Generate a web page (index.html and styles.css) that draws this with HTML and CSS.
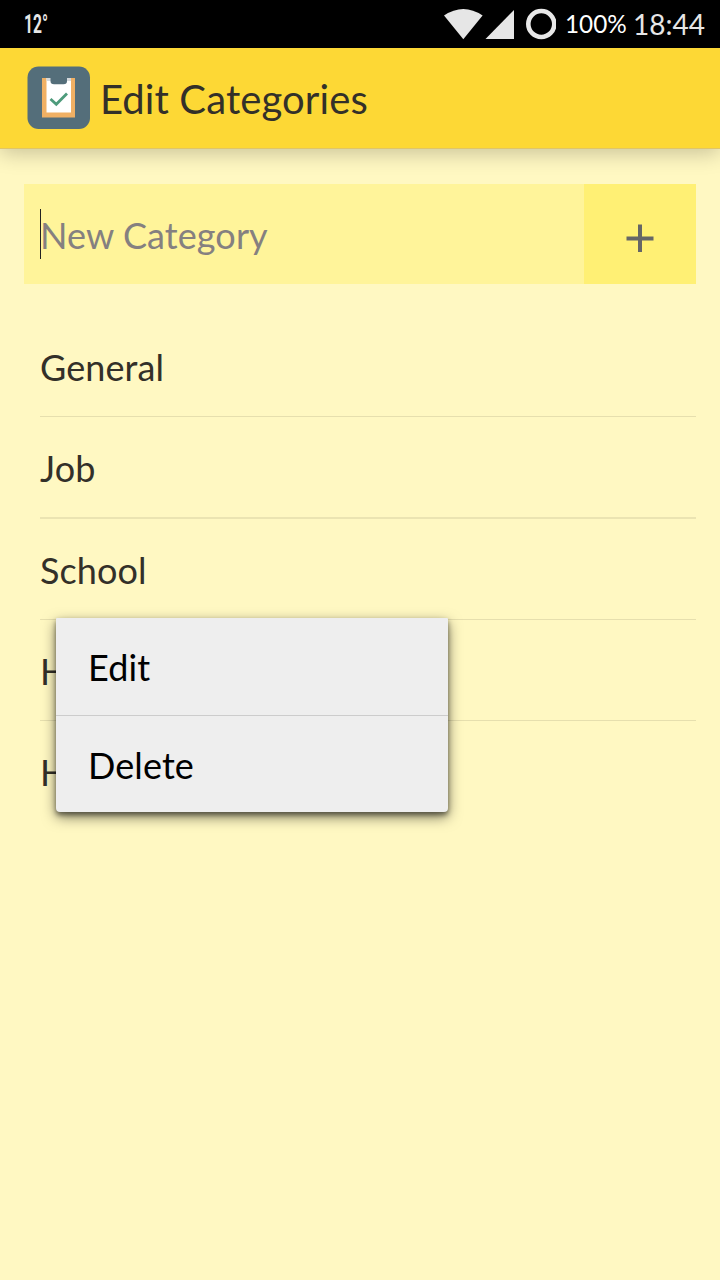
FILE: index.html
```html
<!DOCTYPE html>
<html lang="en">
<head>
<meta charset="utf-8">
<title>Edit Categories</title>
<link rel="stylesheet" href="styles.css">
</head>
<body>
<header class="status">
  <span class="temperature">12°</span>
  <svg class="status-icons" width="116" height="48" viewBox="0 0 116 48">
    <path fill="#e6e6e6" d="M4 15.5Q23.300 2.500 42.600 15.500L23.300 39.300Z"/>
    <path fill="#e6e6e6" d="M45.500 39L74 10V39Z"/>
    <circle cx="101.300" cy="24" r="13" fill="none" stroke="#e8e8e8" stroke-width="4.600"/>
  </svg>
  <span class="battery">100%</span>
  <time class="clock">18:44</time>
</header>
<div class="appbar">
  <svg class="logo" width="64" height="64" viewBox="0 0 64 64">
    <rect x=".5" y=".5" width="62.500" height="62.500" rx="11" fill="#546e7a"/>
    <rect x="15" y="12" width="33" height="39.500" fill="#f0b064"/>
    <path fill="#fff" d="M19.500 12H44V46.500H19.500Z"/>
    <path fill="#d5d9dc" d="M19.500 12H24V15H19.500ZM39.500 12H44V15H39.500Z"/>
    <path fill="#546e7a" d="M23.500 11.500H40V15Q40 18.300 36.500 18.300H27Q23.500 18.300 23.500 15Z"/>
    <path fill="none" stroke="#4e9b7c" stroke-width="2.800" d="M23.500 33L29.300 38.300L40 27.500"/>
  </svg>
  <h1 class="title">Edit Categories</h1>
</div>
<main class="content">
  <div class="entry">
    <div class="field"><span class="caret"></span><span class="hint">New Category</span></div>
    <div class="add">
      <svg width="28" height="28" viewBox="0 0 28 28"><path fill="#666" d="M12 0.500H16V12.500H27.500V16.500H16V28H12V16.500H.5V12.500H12Z"/></svg>
    </div>
  </div>
  <ul class="list">
    <li class="row">General</li>
    <li class="row row-thick">Job</li>
    <li class="row">School</li>
    <li class="row">H</li>
    <li class="row">H</li>
  </ul>
</main>
<div class="menu">
  <div class="item">Edit</div>
  <div class="item">Delete</div>
</div>
</body>
</html>
```
FILE: styles.css
```css
* { box-sizing: border-box; }
body {
  position: relative;
  margin: 0;
  width: 720px;
  height: 1280px;
  overflow: hidden;
  background: #fff8c2;
  color: #333029;
  font-family: Lato, "Open Sans", sans-serif;
  font-size: 36px;
  letter-spacing: .1px;
}
.status {
  display: flex;
  align-items: center;
  height: 48px;
  background: #000;
  color: #e6e6e6;
  letter-spacing: 0;
}
.temperature {
  width: 40px;
  margin: 0 376px 0 24px;
  font: 700 26px/48px Roboto, sans-serif;
  transform: scaleX(.6);
  transform-origin: left;
}
.status-icons { flex: none; }
.battery {
  width: 67px;
  margin-left: 9px;
  font-size: 24.300px;
  line-height: 48px;
  color: #fff;
}
.clock {
  margin-left: 1px;
  font-size: 28px;
  line-height: 50px;
  white-space: nowrap;
}
.appbar {
  display: flex;
  align-items: center;
  height: 101px;
  padding-left: 27px;
  background: #fdd835;
  border-bottom: 1px solid #e0c568;
  box-shadow: 0 4px 20px rgba(0, 0, 0, .22);
}
.logo { flex: none; margin-bottom: 1px; }
.title {
  margin: 1px 0 0 9px;
  font-size: 40px;
  font-weight: 400;
  line-height: 48px;
}
.content { padding: 35px 24px 0; }
.entry { display: flex; height: 100px; }
.field {
  display: flex;
  align-items: center;
  width: 560px;
  padding-left: 16px;
  background: #fff49a;
}
.caret { width: 1px; height: 50px; background: #222; }
.hint { color: #858080; margin: 2px 0 0 -1px; }
.add {
  display: flex;
  align-items: center;
  justify-content: center;
  width: 112px;
  padding-top: 8px;
  background: #fff074;
}
.list {
  margin: 32px 0 0 16px;
  padding: 0;
  list-style: none;
}
.row {
  height: 101.25px;
  padding-top: 3px;
  border-bottom: 1px solid #e6dfae;
  line-height: 96px;
}
.row-thick { border-bottom: 2px solid #ebe4b2; }
.row:last-child { border-bottom: 0; }
.menu {
  position: absolute;
  left: 56px;
  top: 618px;
  width: 392px;
  height: 193.500px;
  background: #eee;
  border-radius: 1px 1px 4px 4px;
  box-shadow: 0 5px 14px rgba(0, 0, 0, .5), 0 3px 5px rgba(0, 0, 0, .45);
  color: #000;
}
.item {
  height: 97px;
  padding: 1px 0 0 32px;
  line-height: 96px;
}
.item + .item { border-top: 1px solid #ccc; }
```
